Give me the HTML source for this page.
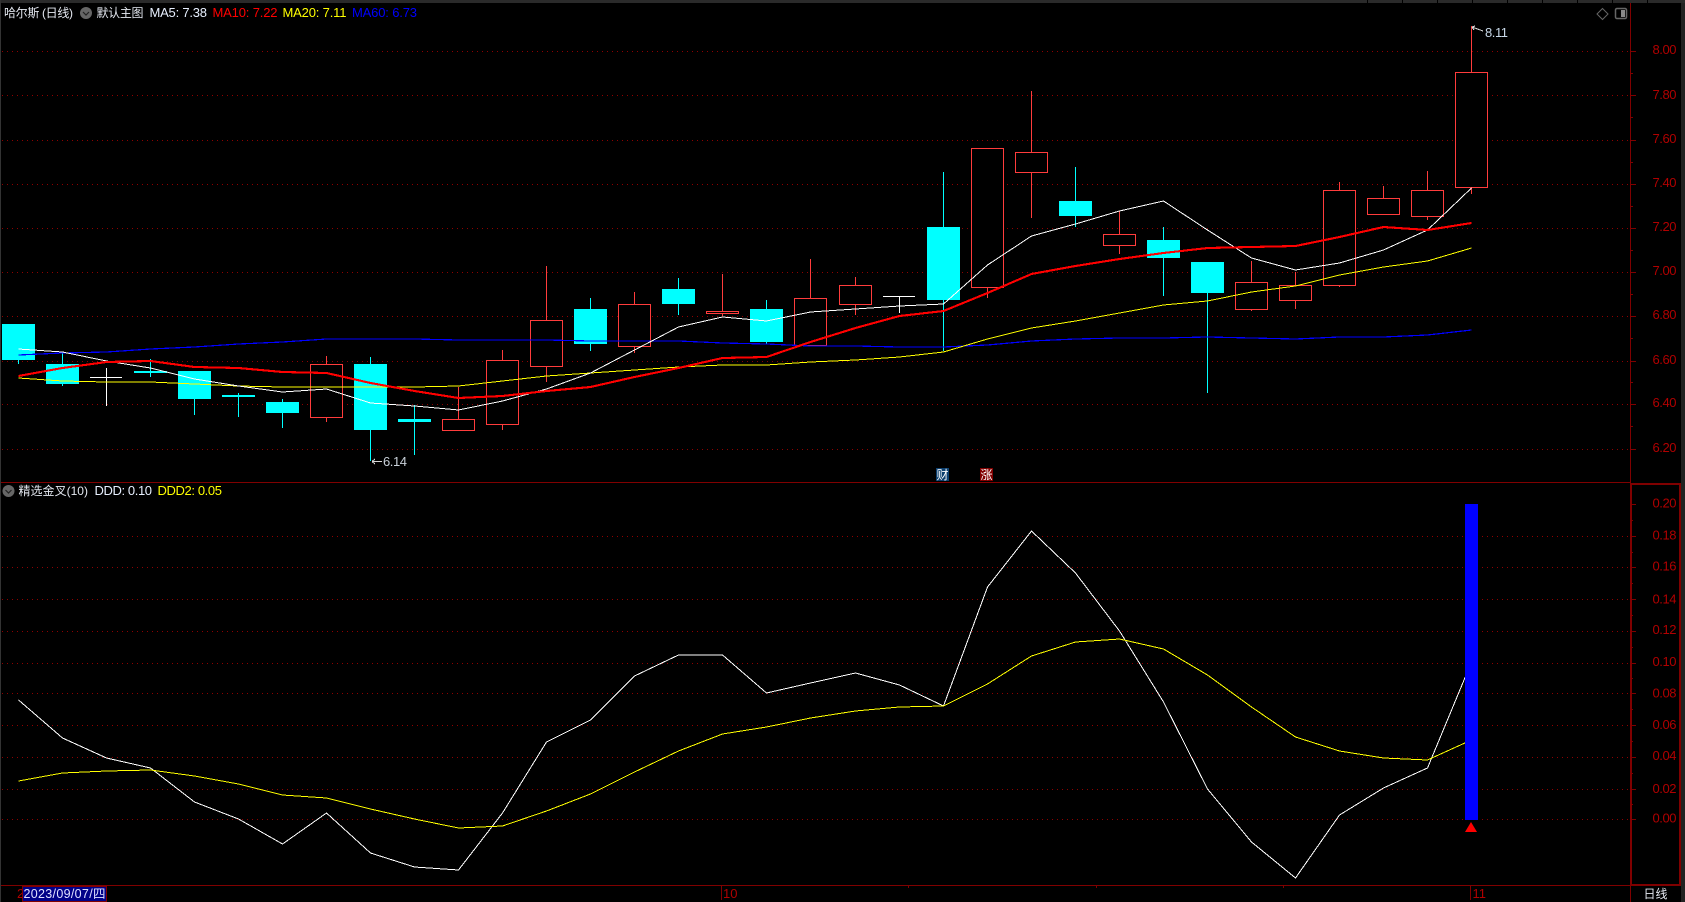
<!DOCTYPE html>
<html><head><meta charset="utf-8"><title>哈尔斯 (日线)</title>
<style>
html,body{margin:0;padding:0;background:#000;width:1685px;height:902px;overflow:hidden}
svg{display:block;position:absolute;left:0;top:0}
text{font-family:"Liberation Sans","Noto Sans CJK SC",sans-serif;font-size:13px}
.a{fill:#b00000}
</style></head><body>
<svg width="1685" height="902" viewBox="0 0 1685 902" xmlns="http://www.w3.org/2000/svg">
<rect width="1685" height="902" fill="#000"/>
<!-- window edges -->
<rect x="0" y="0" width="1685" height="3" fill="#2a2a2a"/>
<path d="M1367.5 0V3M1402.5 0V3M1437.5 0V3M1472.5 0V3M1507.5 0V3M1542.5 0V3M1577.5 0V3M1612.5 0V3M1647.5 0V3" stroke="#000" fill="none"/>
<rect x="0" y="0" width="1" height="902" fill="#333"/>
<rect x="1681" y="3" width="4" height="899" fill="#222"/>
<!-- grid -->
<g stroke="#900000" stroke-width="1" stroke-dasharray="1 4" fill="none" shape-rendering="crispEdges">
<path d="M2 51.5H1628M2 95.5H1628M2 140.5H1628M2 184.5H1628M2 228.5H1628M2 272.5H1628M2 316.5H1628M2 361.5H1628M2 404.5H1628M2 449.5H1628"/>
<path d="M2 536.5H1628M2 567.5H1628M2 599.5H1628M2 631.5H1628M2 663.5H1628M2 693.5H1628M2 725.5H1628M2 757.5H1628M2 789.5H1628M2 819.5H1628"/>
</g>
<!-- axes -->
<g stroke="#800000" fill="none" shape-rendering="crispEdges">
<path d="M1630.5 3V902"/>
<path d="M1 482.5H1631M1 885.5H1681"/>
<path d="M1630 51.5H1636M1630 95.5H1636M1630 140.5H1636M1630 184.5H1636M1630 228.5H1636M1630 272.5H1636M1630 316.5H1636M1630 361.5H1636M1630 404.5H1636M1630 449.5H1636"/>
<path d="M1630 73.5H1633M1630 117.5H1633M1630 162.5H1633M1630 206.5H1633M1630 250.5H1633M1630 294.5H1633M1630 338.5H1633M1630 382.5H1633M1630 426.5H1633"/>
<path d="M1630 504.5H1636M1630 536.5H1636M1630 567.5H1636M1630 599.5H1636M1630 631.5H1636M1630 663.5H1636M1630 693.5H1636M1630 725.5H1636M1630 757.5H1636M1630 789.5H1636M1630 819.5H1636"/>
<path d="M1630 520.5H1633M1630 552.5H1633M1630 583.5H1633M1630 615.5H1633M1630 647.5H1633M1630 678.5H1633M1630 709.5H1633M1630 741.5H1633M1630 773.5H1633M1630 804.5H1633"/>
<rect x="1631" y="484" width="49" height="401" stroke-width="2"/>
<path d="M721.5 885V900M1470.5 885V900M908.5 885V888M1096.5 885V888M1283.5 885V888"/>
</g>
<!-- cyan candles -->
<g shape-rendering="crispEdges">
<path fill="none" stroke="#00ffff" d="M18.5 360V364M62.5 352V386M150.5 359V377M194.5 399V415M238.5 393V417M282.5 399V428M370.5 357V461M414.5 405V455M590.5 298V351M678.5 278V315M766.5 300V344M943.5 172V351M1075.5 167V227M1163.5 227V296M1207.5 262V393"/>
<g fill="#00ffff">
<rect x="2" y="324" width="33" height="36"/>
<rect x="46" y="364" width="33" height="20"/>
<rect x="134" y="371" width="33" height="2"/>
<rect x="178" y="371" width="33" height="28"/>
<rect x="222" y="395" width="33" height="2"/>
<rect x="266" y="402" width="33" height="11"/>
<rect x="354" y="364" width="33" height="66"/>
<rect x="398" y="419" width="33" height="3"/>
<rect x="574" y="309" width="33" height="35"/>
<rect x="662" y="289" width="33" height="15"/>
<rect x="750" y="309" width="33" height="33"/>
<rect x="927" y="227" width="33" height="73"/>
<rect x="1059" y="201" width="33" height="15"/>
<rect x="1147" y="240" width="33" height="18"/>
<rect x="1191" y="262" width="33" height="31"/>
</g>
<!-- white dojis -->
<path fill="none" stroke="#fff" d="M90 377.5H122M106.5 368V406M883 296.5H915M899.5 296V313"/>
<!-- red candles -->
<path fill="none" stroke="#ff3c3c" d="M326.5 356V422M458.5 387V431M502.5 350V430M546.5 266V382M634.5 292V353M722.5 274V316M810.5 259V346M855.5 277V315M987.5 148V298M1031.5 91V218M1119.5 211V254M1251.5 261V311M1295.5 272V309M1339.5 182V287M1383.5 186V215M1427.5 171V220M1471.5 26V194"/>
<g fill="#000" stroke="#ff3c3c">
<rect x="310.5" y="364.5" width="32" height="53"/>
<rect x="442.5" y="419.5" width="32" height="11"/>
<rect x="486.5" y="360.5" width="32" height="64"/>
<rect x="530.5" y="320.5" width="32" height="46"/>
<rect x="618.5" y="304.5" width="32" height="42"/>
<rect x="706.5" y="311.5" width="32" height="2"/>
<rect x="794.5" y="298.5" width="32" height="47"/>
<rect x="839.5" y="285.5" width="32" height="19"/>
<rect x="971.5" y="148.5" width="32" height="139"/>
<rect x="1015.5" y="152.5" width="32" height="20"/>
<rect x="1103.5" y="234.5" width="32" height="11"/>
<rect x="1235.5" y="282.5" width="32" height="27"/>
<rect x="1279.5" y="285.5" width="32" height="15"/>
<rect x="1323.5" y="190.5" width="32" height="95"/>
<rect x="1367.5" y="198.5" width="32" height="16"/>
<rect x="1411.5" y="190.5" width="32" height="26"/>
<rect x="1455.5" y="72.5" width="32" height="115"/>
</g>
</g>
<!-- MA lines -->
<g fill="none" shape-rendering="crispEdges" stroke-linejoin="round">
<polyline stroke="#0000ff" stroke-width="1.2" points="18.5,355 62.5,353 106.5,352 150.5,349 194.5,347 238.5,344 282.5,342 326.5,339 370.5,339 414.5,339 458.5,340 502.5,340 546.5,340 590.5,341 634.5,341 678.5,341 722.5,343 766.5,344 810.5,346 855.5,346 899.5,347 943.5,347 987.5,345 1031.5,341 1075.5,339 1119.5,338 1163.5,338 1207.5,337 1251.5,338 1295.5,339 1339.5,337 1383.5,337 1427.5,335 1471.5,330"/>
<polyline stroke="#ffff00" stroke-width="1" points="18.5,378 62.5,381 106.5,382 150.5,382 194.5,384 238.5,386 282.5,387 326.5,387 370.5,387 414.5,387 458.5,386 502.5,381 546.5,376 590.5,373 634.5,370 678.5,367 722.5,365 766.5,365 810.5,362 855.5,360 899.5,357 943.5,352 987.5,339 1031.5,328 1075.5,321 1119.5,313 1163.5,305 1207.5,301 1251.5,292 1295.5,286 1339.5,275 1383.5,267 1427.5,261 1471.5,248"/>
<polyline stroke="#ffffff" stroke-width="1" points="18.5,349 62.5,352 106.5,361 150.5,368 194.5,379 238.5,386 282.5,392 326.5,389 370.5,403 414.5,406 458.5,410 502.5,401 546.5,389 590.5,373 634.5,350 678.5,327 722.5,317 766.5,321 810.5,312 855.5,309 899.5,306 943.5,304 987.5,265 1031.5,236 1075.5,224 1119.5,211 1163.5,201 1207.5,230 1251.5,258 1295.5,270 1339.5,263 1383.5,250 1427.5,230 1471.5,188"/>
<polyline stroke="#ff0000" stroke-width="2.1" points="18.5,376 62.5,368 106.5,362 150.5,361 194.5,367 238.5,368 282.5,372 326.5,373 370.5,383 414.5,391 458.5,398 502.5,396 546.5,391 590.5,387 634.5,377 678.5,368 722.5,358 766.5,357 810.5,342 855.5,328 899.5,316 943.5,311 987.5,293 1031.5,274 1075.5,266 1119.5,259 1163.5,253 1207.5,248 1251.5,247 1295.5,246 1339.5,237 1383.5,227 1427.5,230 1471.5,223"/>
<!-- lower pane -->
<polyline stroke="#ffffff" stroke-width="1" points="18.5,700 62.5,738 106.5,758 150.5,768 194.5,802 238.5,819 282.5,844 326.5,813 370.5,853 414.5,867 458.5,870 502.5,813 546.5,742 590.5,720 634.5,676 678.5,655 722.5,655 766.5,693 810.5,683 855.5,673 899.5,685 943.5,706 987.5,587 1031.5,531 1075.5,573 1119.5,631 1163.5,702 1207.5,789 1251.5,842 1295.5,878 1339.5,815 1383.5,788 1427.5,768 1471.5,662"/>
<polyline stroke="#ffff00" stroke-width="1" points="18.5,781 62.5,773 106.5,771 150.5,770 194.5,776 238.5,784 282.5,795 326.5,798 370.5,809 414.5,819 458.5,828 502.5,826 546.5,811 590.5,794 634.5,772 678.5,751 722.5,734 766.5,727 810.5,718 855.5,711 899.5,707 943.5,706 987.5,684 1031.5,656 1075.5,642 1119.5,639 1163.5,649 1207.5,675 1251.5,707 1295.5,737 1339.5,751 1383.5,758 1427.5,760 1471.5,740"/>
</g>
<!-- DDD bar + triangle -->
<rect x="1465" y="504" width="13" height="316" fill="#0000ff"/>
<polygon points="1471,822 1477,832 1465,832" fill="#ff0000"/>
<!-- high/low markers -->
<g fill="none" stroke="#d8d8d8" stroke-width="1" shape-rendering="crispEdges">
<path d="M372 461.5H382M372 461.5L375 459M372 461.5L375 464"/>
<path d="M1472 27L1483 31M1472 27L1475 26M1472 27L1474 30"/>
</g>
<text x="383" y="466" textLength="24" fill="#c8d0d8">6.14</text>
<text x="1485" y="37" textLength="23" fill="#c8d8e8">8.11</text>
<!-- 财 / 涨 flags -->
<rect x="936" y="468" width="13" height="13" fill="#0c3f6e"/>
<text x="936.5" y="479" style="font-size:12px" fill="#fff">财</text>
<rect x="980" y="468" width="13" height="13" fill="#800000"/>
<text x="980.5" y="479" style="font-size:12px" fill="#fff">涨</text>
<!-- header -->
<text x="4" y="17" textLength="69" style="font-size:12px" fill="#e4e8f0">哈尔斯 (日线)</text>
<circle cx="86" cy="13" r="6" fill="#666"/>
<path d="M83 12L86 15L89 12" fill="none" stroke="#222" stroke-width="1.2"/>
<text x="96.5" y="17" textLength="47" style="font-size:12px" fill="#e4e8f0">默认主图</text>
<text x="149.5" y="17" textLength="57.5" fill="#e8f0ff">MA5: 7.38</text>
<text x="212.5" y="17" textLength="65" fill="#ff0000">MA10: 7.22</text>
<text x="282.5" y="17" textLength="64" fill="#ffff00">MA20: 7.11</text>
<text x="352" y="17" textLength="65" fill="#0000ff">MA60: 6.73</text>
<!-- sub header -->
<circle cx="8.5" cy="491" r="6" fill="#666"/>
<path d="M5.5 490L8.5 493L11.5 490" fill="none" stroke="#222" stroke-width="1.2"/>
<text x="18.5" y="495" textLength="69.5" style="font-size:12px" fill="#e4e8f0">精选金叉(10)</text>
<text x="94.5" y="495" textLength="57.5" fill="#e8f0ff">DDD: 0.10</text>
<text x="157.5" y="495" textLength="64.5" fill="#ffff00">DDD2: 0.05</text>
<!-- top-right icons -->
<g fill="none" stroke="#666" stroke-width="1">
<polygon points="1602.5,8.5 1608,14 1602.5,19.5 1597,14"/>
<rect x="1615.5" y="8.5" width="11" height="10" rx="1.5" stroke-width="1.5"/>
</g>
<rect x="1621" y="10" width="4" height="7" fill="#888"/>
<!-- axis labels -->
<g class="a">
<text class="a" x="1652.5" y="54" textLength="24">8.00</text>
<text class="a" x="1652.5" y="99" textLength="24">7.80</text>
<text class="a" x="1652.5" y="143" textLength="24">7.60</text>
<text class="a" x="1652.5" y="187" textLength="24">7.40</text>
<text class="a" x="1652.5" y="231" textLength="24">7.20</text>
<text class="a" x="1652.5" y="275" textLength="24">7.00</text>
<text class="a" x="1652.5" y="319" textLength="24">6.80</text>
<text class="a" x="1652.5" y="364" textLength="24">6.60</text>
<text class="a" x="1652.5" y="407" textLength="24">6.40</text>
<text class="a" x="1652.5" y="452" textLength="24">6.20</text>
<text class="a" x="1652.5" y="507.5" textLength="24">0.20</text>
<text class="a" x="1652.5" y="539.5" textLength="24">0.18</text>
<text class="a" x="1652.5" y="570.5" textLength="24">0.16</text>
<text class="a" x="1652.5" y="603.5" textLength="24">0.14</text>
<text class="a" x="1652.5" y="634" textLength="24">0.12</text>
<text class="a" x="1652.5" y="666" textLength="24">0.10</text>
<text class="a" x="1652.5" y="697.5" textLength="24">0.08</text>
<text class="a" x="1652.5" y="729" textLength="24">0.06</text>
<text class="a" x="1652.5" y="760" textLength="24">0.04</text>
<text class="a" x="1652.5" y="793" textLength="24">0.02</text>
<text class="a" x="1652.5" y="822.5" textLength="24">0.00</text>
<text class="a" x="723" y="898">10</text>
<text class="a" x="1472.5" y="898">11</text>
<text class="a" x="17" y="898">2</text>
</g>
<text x="1643.5" y="898" textLength="24" style="font-size:12px" fill="#e4e8f0">日线</text>
<!-- date box -->
<rect x="22.5" y="886.5" width="84" height="15" fill="#000088" stroke="#800000"/>
<text x="23.5" y="898" textLength="82" style="font-size:12.5px" fill="#e0e0ff">2023/09/07/四</text>
</svg>
</body></html>
